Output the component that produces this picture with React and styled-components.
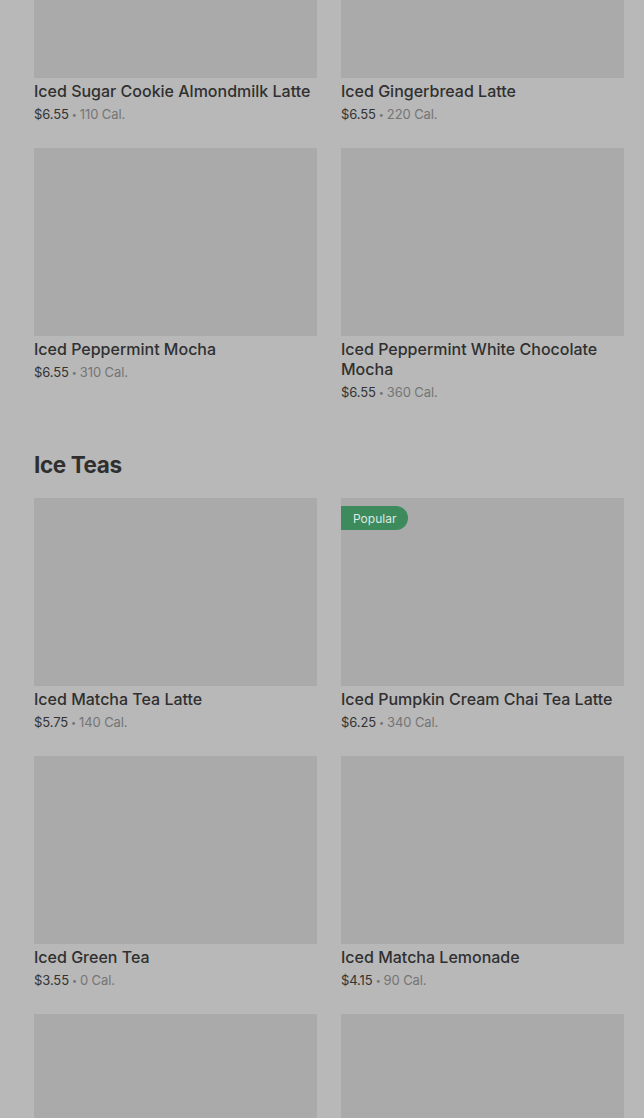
import React from "react";
import styled, { createGlobalStyle } from "styled-components";

const Global = createGlobalStyle`
  html, body {
    margin: 0;
    padding: 0;
    background: #b8b8b8;
    overflow: hidden;
    font-family: Inter, "Liberation Sans", sans-serif;
  }
`;

const Page = styled.div`
  width: 644px;
  height: 1118px;
  overflow: hidden;
  box-sizing: border-box;
  padding: 0 20px 0 34px;
`;

const Scroller = styled.div`
  margin-top: -110px;
`;

const Section = styled.section`
  display: flex;
  flex-direction: column;
`;

const Heading = styled.h2`
  margin: 47px 0 17px;
  font-size: 22.5px;
  line-height: 32px;
  font-weight: 700;
  letter-spacing: -0.4px;
  color: #2f2f2f;
`;

const Grid = styled.div`
  display: grid;
  grid-template-columns: 283px 283px;
  column-gap: 24px;
  row-gap: 24px;
  align-items: start;
`;

const Card = styled.div`
  display: flex;
  flex-direction: column;
`;

const Thumb = styled.div`
  position: relative;
  height: 188px;
  background: #aaaaaa;
`;

const Badge = styled.span`
  position: absolute;
  top: 8px;
  left: 0;
  height: 24px;
  padding: 0 12px;
  display: flex;
  align-items: center;
  background: #3d8a5c;
  color: #dfe9e2;
  font-size: 12px;
  border-radius: 0 12px 12px 0;
`;

const Name = styled.div`
  margin-top: 3px;
  font-size: 16px;
  line-height: 20px;
  font-weight: 500;
  color: #303030;
`;

const Meta = styled.div`
  margin-top: 3px;
  height: 20px;
  display: flex;
  align-items: center;
  font-size: 13px;
  line-height: 20px;
  letter-spacing: -0.1px;
  color: #757575;
`;

const Price = styled.span`
  color: #333333;
`;

const Dot = styled.span`
  font-size: 9px;
  line-height: 1;
  margin: 0 3px;
`;

const coffees = [
  { name: "Iced Sugar Cookie Almondmilk Latte", price: "$6.55", cal: "110 Cal." },
  { name: "Iced Gingerbread Latte", price: "$6.55", cal: "220 Cal." },
  { name: "Iced Peppermint Mocha", price: "$6.55", cal: "310 Cal." },
  { name: "Iced Peppermint White Chocolate Mocha", price: "$6.55", cal: "360 Cal." },
];

const teas = [
  { name: "Iced Matcha Tea Latte", price: "$5.75", cal: "140 Cal." },
  { name: "Iced Pumpkin Cream Chai Tea Latte", price: "$6.25", cal: "340 Cal.", popular: true },
  { name: "Iced Green Tea", price: "$3.55", cal: "0 Cal." },
  { name: "Iced Matcha Lemonade", price: "$4.15", cal: "90 Cal." },
  { id: "more-1" },
  { id: "more-2" },
];

const Item = ({ item }) => (
  <Card>
    <Thumb>{item.popular && <Badge>Popular</Badge>}</Thumb>
    {item.name && (
      <>
        <Name>{item.name}</Name>
        <Meta>
          <Price>{item.price}</Price>
          <Dot>•</Dot>
          <span>{item.cal}</span>
        </Meta>
      </>
    )}
  </Card>
);

const App = () => (
  <Page>
    <Global />
    <Scroller>
      <Section>
        <Grid>
          {coffees.map((c) => (
            <Item key={c.name} item={c} />
          ))}
        </Grid>
      </Section>
      <Section>
        <Heading>Ice Teas</Heading>
        <Grid>
          {teas.map((t) => (
            <Item key={t.name || t.id} item={t} />
          ))}
        </Grid>
      </Section>
    </Scroller>
  </Page>
);

export default App;
